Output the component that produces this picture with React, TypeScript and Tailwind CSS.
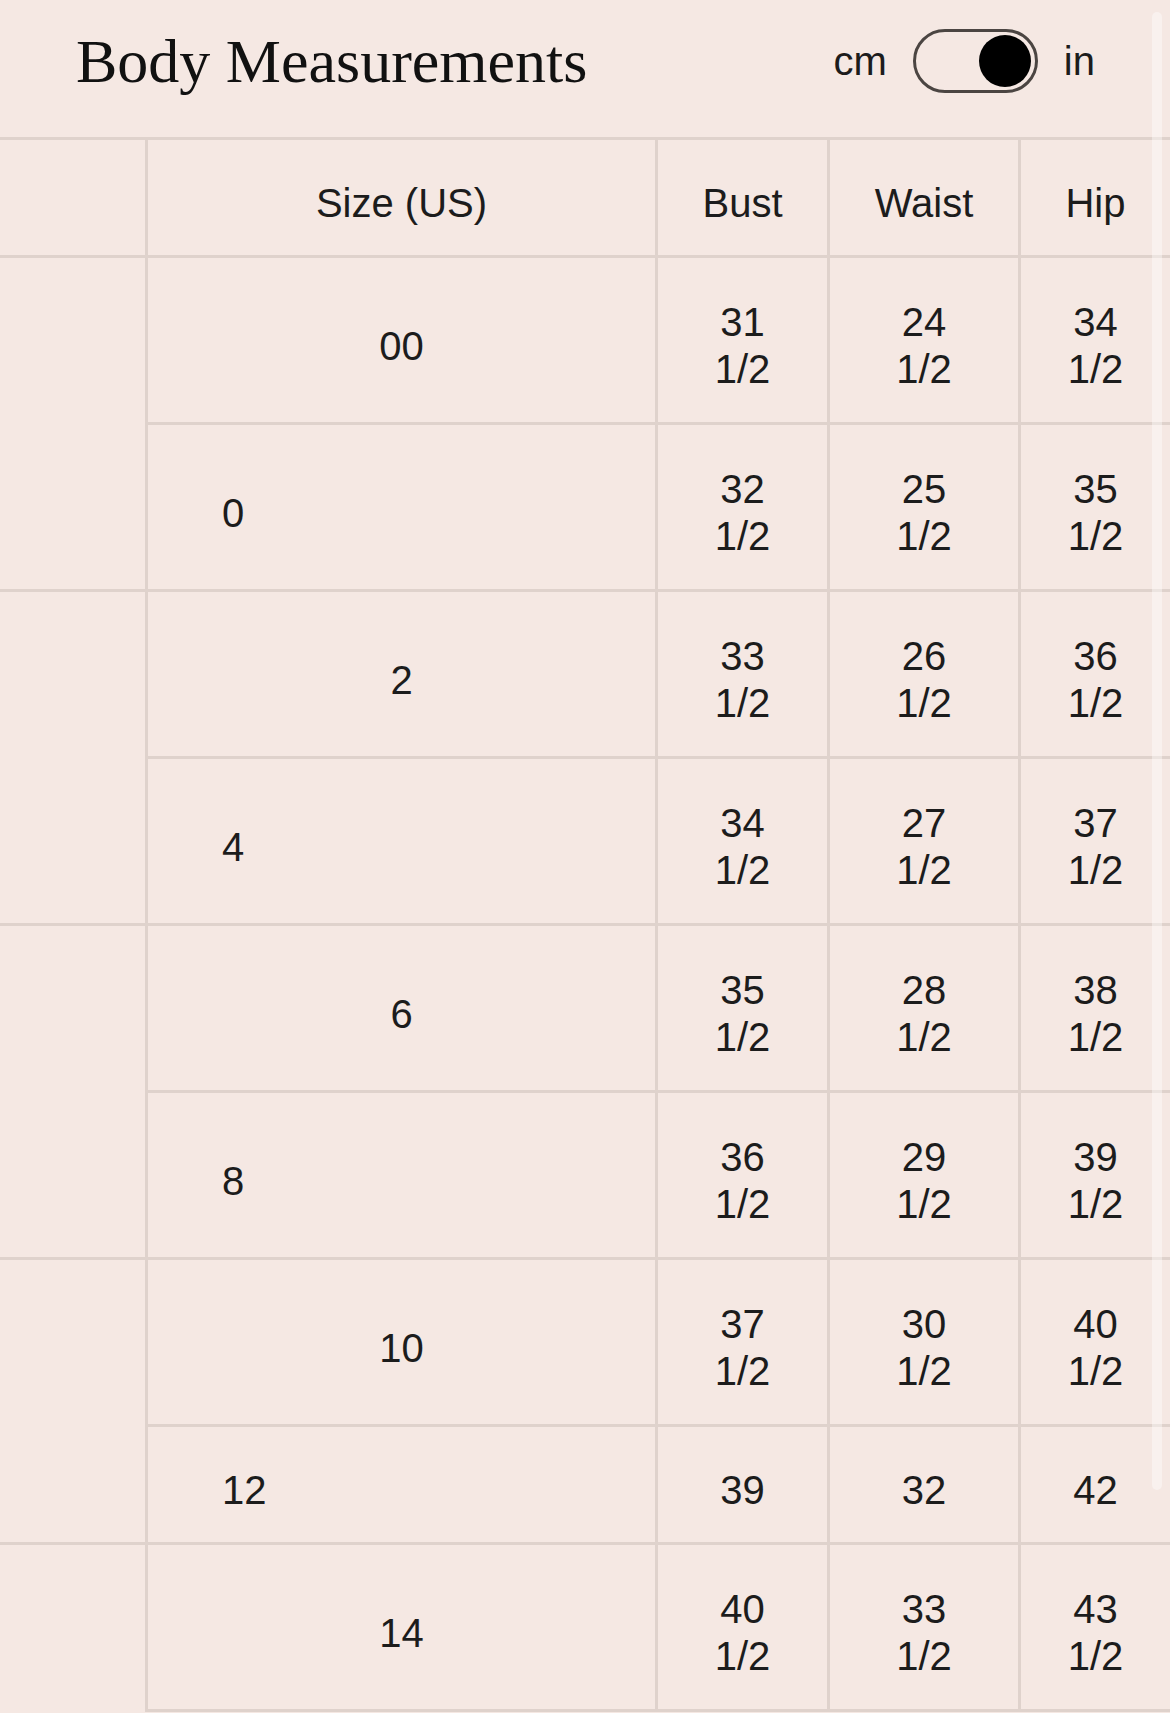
import React from "react";

type Row = { size: string; bust: string; waist: string; hip: string; half: boolean; lead: boolean };

const rows: Row[] = [
  { size: "00", bust: "31", waist: "24", hip: "34", half: true, lead: true },
  { size: "0", bust: "32", waist: "25", hip: "35", half: true, lead: false },
  { size: "2", bust: "33", waist: "26", hip: "36", half: true, lead: true },
  { size: "4", bust: "34", waist: "27", hip: "37", half: true, lead: false },
  { size: "6", bust: "35", waist: "28", hip: "38", half: true, lead: true },
  { size: "8", bust: "36", waist: "29", hip: "39", half: true, lead: false },
  { size: "10", bust: "37", waist: "30", hip: "40", half: true, lead: true },
  { size: "12", bust: "39", waist: "32", hip: "42", half: false, lead: false },
  { size: "14", bust: "40", waist: "33", hip: "43", half: true, lead: true },
];

function Value({ n, half }: { n: string; half: boolean }) {
  return (
    <div className="flex flex-col items-center text-center">
      <span>{n}</span>
      {half && <span>1/2</span>}
    </div>
  );
}

function Toggle() {
  return (
    <div className="flex items-center gap-[26px] text-[40px] leading-none text-[#1c1c1c]">
      <span>cm</span>
      <div className="flex h-[64px] w-[125px] items-center justify-end rounded-full border-[3px] border-[#4b4542] pr-[4px]">
        <div className="h-[52px] w-[52px] rounded-full bg-black" />
      </div>
      <span>in</span>
    </div>
  );
}

export default function App() {
  const cell = "bg-[#f5e8e3] flex items-center pt-[12px]";

  return (
    <div className="relative min-h-screen w-full overflow-hidden bg-[#f5e8e3] font-['Liberation_Sans',Arial,sans-serif] text-[#1c1c1c]">
      <div className="flex h-[121px] items-center justify-between pl-[76px] pr-[75px]">
        <h1 className="font-['Liberation_Serif',serif] text-[62px] font-normal leading-none text-[#111]">
          Body Measurements
        </h1>
        <Toggle />
      </div>
      <div className="h-[16px]" />

      <div className="grid grid-cols-[145px_507px_169px_188px_1fr] gap-[3px] bg-[#dfd2cc] pt-[3px] text-[40px] leading-[47px]">
        <div className={cell + " h-[115px]"} />
        <div className={cell + " justify-center"}>Size (US)</div>
        <div className={cell + " justify-center"}>Bust</div>
        <div className={cell + " justify-center"}>Waist</div>
        <div className={cell + " justify-center"}>Hip</div>

        {rows.map((r, i) => {
          const h = r.half ? "h-[164px]" : "h-[115px]";
          const last = i === rows.length - 1;
          const bottom = last ? " h-[167px] border-b-[3px] border-[#dfd2cc]" : " " + h;
          return (
            <React.Fragment key={r.size}>
              {r.lead && <div className={cell + (last ? "" : " row-span-2")} />}
              <div className={cell + bottom + (r.lead ? " justify-center" : " pl-[74px]")}>{r.size}</div>
              <div className={cell + bottom + " justify-center"}>
                <Value n={r.bust} half={r.half} />
              </div>
              <div className={cell + bottom + " justify-center"}>
                <Value n={r.waist} half={r.half} />
              </div>
              <div className={cell + bottom + " justify-center"}>
                <Value n={r.hip} half={r.half} />
              </div>
            </React.Fragment>
          );
        })}
      </div>

      <div className="absolute right-[8px] top-[12px] h-[1478px] w-[10px] rounded-full bg-white/40" />
    </div>
  );
}
